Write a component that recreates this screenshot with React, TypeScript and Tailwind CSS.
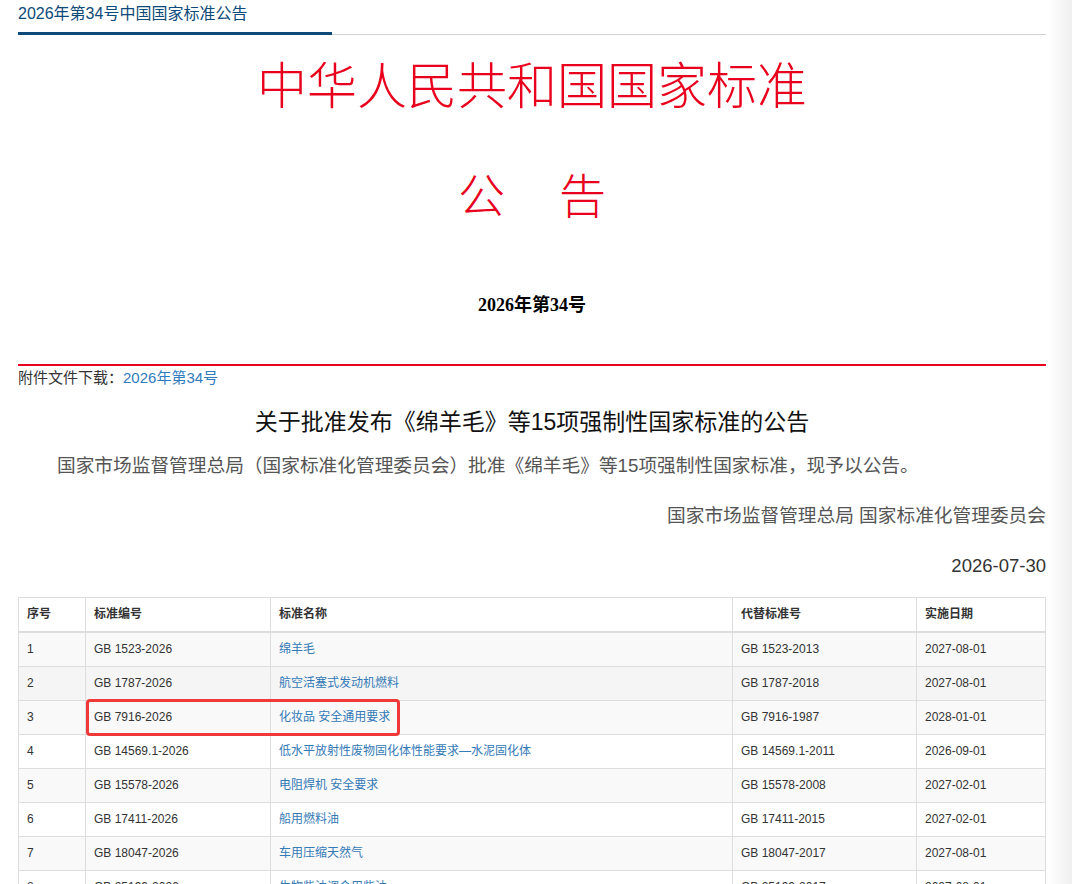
import React from "react";

const sans = '"Liberation Sans", "Noto Sans CJK SC", sans-serif';
const serif = '"Liberation Serif", "Noto Sans CJK SC", serif';

interface Row {
  no: string;
  code: string;
  name: string;
  replaces: string;
  date: string;
}

const rows: Row[] = [
  { no: "1", code: "GB 1523-2026", name: "绵羊毛", replaces: "GB 1523-2013", date: "2027-08-01" },
  { no: "2", code: "GB 1787-2026", name: "航空活塞式发动机燃料", replaces: "GB 1787-2018", date: "2027-08-01" },
  { no: "3", code: "GB 7916-2026", name: "化妆品 安全通用要求", replaces: "GB 7916-1987", date: "2028-01-01" },
  { no: "4", code: "GB 14569.1-2026", name: "低水平放射性废物固化体性能要求—水泥固化体", replaces: "GB 14569.1-2011", date: "2026-09-01" },
  { no: "5", code: "GB 15578-2026", name: "电阻焊机 安全要求", replaces: "GB 15578-2008", date: "2027-02-01" },
  { no: "6", code: "GB 17411-2026", name: "船用燃料油", replaces: "GB 17411-2015", date: "2027-02-01" },
  { no: "7", code: "GB 18047-2026", name: "车用压缩天然气", replaces: "GB 18047-2017", date: "2027-08-01" },
  { no: "8", code: "GB 25199-2026", name: "生物柴油调合用柴油", replaces: "GB 25199-2017", date: "2027-08-01" },
];

// row 2 is in hover state in the reference, so it is grey as well
const rowBg = ["bg-[#f9f9f9]", "bg-[#f5f5f5]", "bg-[#f9f9f9]", "bg-white", "bg-[#f9f9f9]", "bg-white", "bg-[#f9f9f9]", "bg-white"];

export default function App() {
  return (
    <div className="relative min-h-[884px] overflow-hidden bg-white" style={{ fontFamily: sans }}>
      {/* right side shadow of the page container */}
      <div className="absolute right-0 top-0 h-full w-[24px] bg-gradient-to-r from-white to-[#efefef]" />

      <div className="relative w-[1028px] ml-[18px]">
        {/* breadcrumb title */}
        <div className="pt-[3px]">
          <div className="text-[16px] leading-[22px] text-[#0d4a7a]">2026年第34号中国国家标准公告</div>
          <div className="mt-[7px] flex items-end">
            <div className="w-[314px] h-[3px] bg-[#0d4a7a]" />
            <div className="flex-1 h-px bg-[#d2d2d2]" />
          </div>
        </div>

        {/* red heading */}
        <div className="text-center text-[#e8001c]" style={{ fontFamily: serif }}>
          <div className="mt-[24px] text-[50px] leading-[56px] font-light">中华人民共和国国家标准</div>
          <div className="mt-[54px] flex justify-center gap-[54px] text-[47px] leading-[56px] font-light">
            <span>公</span>
            <span>告</span>
          </div>
        </div>

        <div className="mt-[68px] text-center text-[18px] leading-[24px] font-bold text-black" style={{ fontFamily: serif }}>
          2026年第34号
        </div>

        <div className="mt-[47px] h-[2px] bg-[#e8001c]" />

        <div className="mt-[2px] text-[15px] leading-[20px] text-[#333]">
          附件文件下载：<a className="text-[#2f7bbd]">2026年第34号</a>
        </div>

        <h1 className="mt-[19px] text-center text-[23px] leading-[30px] text-[#111]">
          关于批准发布《绵羊毛》等15项强制性国家标准的公告
        </h1>

        <p className="mt-[16px] indent-[39px] text-[18.7px] leading-[26px] text-[#555]">
          国家市场监督管理总局（国家标准化管理委员会）批准《绵羊毛》等15项强制性国家标准，现予以公告。
        </p>

        <p className="mt-[24px] text-right text-[18.7px] leading-[26px] text-[#555]">
          国家市场监督管理总局 国家标准化管理委员会
        </p>

        <p className="mt-[24px] text-right text-[18.5px] leading-[26px] text-[#333]">2026-07-30</p>

        {/* standards table */}
        <div className="relative mt-[18px]">
          <table className="w-full border-collapse border border-[#ddd] text-[12px] leading-[17px] text-[#333]">
            <thead>
              <tr className="bg-white">
                <th className="w-[67px] border border-[#ddd] border-b-2 px-2 py-2 text-left font-bold">序号</th>
                <th className="w-[185px] border border-[#ddd] border-b-2 px-2 py-2 text-left font-bold">标准编号</th>
                <th className="w-[462px] border border-[#ddd] border-b-2 px-2 py-2 text-left font-bold">标准名称</th>
                <th className="w-[184px] border border-[#ddd] border-b-2 px-2 py-2 text-left font-bold">代替标准号</th>
                <th className="border border-[#ddd] border-b-2 px-2 py-2 text-left font-bold">实施日期</th>
              </tr>
            </thead>
            <tbody>
              {rows.map((r, i) => (
                <tr key={r.no} className={rowBg[i]}>
                  <td className="border border-[#ddd] px-2 py-2">{r.no}</td>
                  <td className="border border-[#ddd] px-2 py-2">{r.code}</td>
                  <td className="border border-[#ddd] px-2 py-2">
                    <a className="text-[#337ab7]">{r.name}</a>
                  </td>
                  <td className="border border-[#ddd] px-2 py-2">{r.replaces}</td>
                  <td className="border border-[#ddd] px-2 py-2">{r.date}</td>
                </tr>
              ))}
            </tbody>
          </table>

          {/* highlight annotation around row 3 */}
          <div className="absolute left-[68px] top-[102px] w-[314px] h-[37px] rounded-[4px] border-[3px] border-[#f03a3a]" />
        </div>
      </div>
    </div>
  );
}
